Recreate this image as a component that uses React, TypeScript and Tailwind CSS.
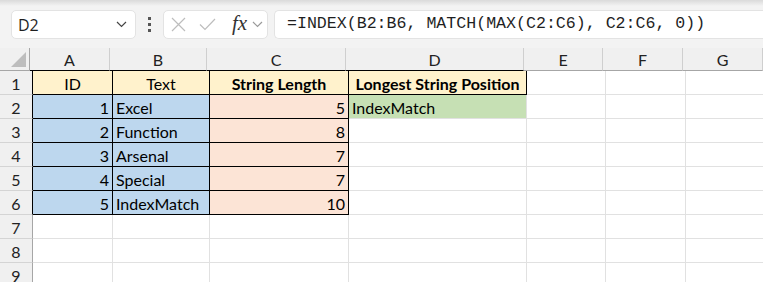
import React from "react";

const cols = [
  { key: "A", w: 80 },
  { key: "B", w: 97 },
  { key: "C", w: 139 },
  { key: "D", w: 178 },
  { key: "E", w: 79 },
  { key: "F", w: 80 },
  { key: "G", w: 80 },
];

type Cell = { v?: string; bg?: string; align?: "l" | "r" | "c"; bold?: boolean; boxed?: boolean };

const rows: Cell[][] = [
  [
    { v: "ID", bg: "bg-[#fff2cc]", align: "c", boxed: true },
    { v: "Text", bg: "bg-[#fff2cc]", align: "c", boxed: true },
    { v: "String Length", bg: "bg-[#fff2cc]", align: "c", bold: true, boxed: true },
    { v: "Longest String Position", bg: "bg-[#fff2cc]", align: "c", bold: true, boxed: true },
  ],
  [
    { v: "1", bg: "bg-[#bdd7ee]", align: "r", boxed: true },
    { v: "Excel", bg: "bg-[#bdd7ee]", boxed: true },
    { v: "5", bg: "bg-[#fce4d6]", align: "r", boxed: true },
    { v: "IndexMatch", bg: "bg-[#c6e0b4]" },
  ],
  [
    { v: "2", bg: "bg-[#bdd7ee]", align: "r", boxed: true },
    { v: "Function", bg: "bg-[#bdd7ee]", boxed: true },
    { v: "8", bg: "bg-[#fce4d6]", align: "r", boxed: true },
  ],
  [
    { v: "3", bg: "bg-[#bdd7ee]", align: "r", boxed: true },
    { v: "Arsenal", bg: "bg-[#bdd7ee]", boxed: true },
    { v: "7", bg: "bg-[#fce4d6]", align: "r", boxed: true },
  ],
  [
    { v: "4", bg: "bg-[#bdd7ee]", align: "r", boxed: true },
    { v: "Special", bg: "bg-[#bdd7ee]", boxed: true },
    { v: "7", bg: "bg-[#fce4d6]", align: "r", boxed: true },
  ],
  [
    { v: "5", bg: "bg-[#bdd7ee]", align: "r", boxed: true },
    { v: "IndexMatch", bg: "bg-[#bdd7ee]", boxed: true },
    { v: "10", bg: "bg-[#fce4d6]", align: "r", boxed: true },
  ],
  [],
  [],
  [],
];

function Chevron({ className }: { className?: string }) {
  return (
    <svg width="11" height="7" viewBox="0 0 11 7" className={className}>
      <path d="M1 1l4.5 4.5L10 1" fill="none" stroke="currentColor" strokeWidth="1.2" />
    </svg>
  );
}

function Toolbar() {
  return (
    <div className="h-[48px] bg-[#f3f3f3] relative">
      <div className="absolute inset-x-0 top-0 h-[6px] bg-gradient-to-b from-[#dadada] to-[#f3f3f3]" />
      <div className="flex items-center h-full pt-[1px] pl-[11px]">
        <div className="w-[125px] h-[29px] bg-white border border-[#e3e3e3] rounded-[5px] flex items-center justify-between pl-[6px] pr-[8px]">
          <span className="text-[16px] text-[#1f1f1f] font-['Open_Sans',sans-serif]">D2</span>
          <Chevron className="text-[#444]" />
        </div>
        <div className="w-[27px] flex flex-col items-center gap-[3px]">
          <span className="w-[3px] h-[3px] bg-[#555]" />
          <span className="w-[3px] h-[3px] bg-[#555]" />
          <span className="w-[3px] h-[3px] bg-[#555]" />
        </div>
        <div className="w-[105px] h-[29px] bg-white border border-[#e3e3e3] rounded-[5px] flex items-center pl-[7px]">
          <svg width="15" height="15" viewBox="0 0 15 15">
            <path d="M1 1l13 13M14 1L1 14" stroke="#bdbdbd" strokeWidth="1.2" />
          </svg>
          <svg width="17" height="13" viewBox="0 0 17 13" className="ml-[13px]">
            <path d="M1 6.5l5 5L16 1" fill="none" stroke="#bdbdbd" strokeWidth="1.2" />
          </svg>
          <span className="ml-[16px] text-[21px] leading-none italic text-[#333] font-['Liberation_Serif',serif] -mt-[3px]">fx</span>
          <Chevron className="ml-[5px] text-[#9a9a9a]" />
        </div>
        <div className="ml-[6px] flex-1 h-[29px] bg-white border border-[#e3e3e3] border-r-0 rounded-l-[5px] flex items-center pl-[12px]">
          <span className="text-[16.6px] text-[#1f1f1f] font-['Liberation_Mono',monospace] whitespace-nowrap">
            =INDEX(B2:B6, MATCH(MAX(C2:C6), C2:C6, 0))
          </span>
        </div>
      </div>
    </div>
  );
}

export default function App() {
  return (
    <div className="w-[763px] h-[282px] overflow-hidden bg-white font-['Lato',sans-serif] text-[16px] text-black">
      <Toolbar />
      <div className="flex">
        {/* corner */}
        <div className="w-[33px] h-[23px] bg-[#f0f0f0] border-r border-b border-[#a6a6a6] flex items-end justify-end pr-[3px] pb-[3px]">
          <svg width="15" height="15" viewBox="0 0 15 15">
            <path d="M15 0V15H0Z" fill="#bdbdbd" />
          </svg>
        </div>
        {cols.map((c, i) => (
          <div
            key={c.key}
            style={{ width: c.w }}
            className={`h-[23px] shrink-0 bg-[#f0f0f0] border-r border-[#cfcfcf] border-b flex items-center justify-center pt-[1px] text-[#222] ${
              i < 4 ? "border-b-black" : "border-b-[#a6a6a6]"
            }`}
          >
            {c.key}
          </div>
        ))}
      </div>
      {rows.map((r, ri) => (
        <div key={ri} className="flex">
          <div
            className={`w-[33px] h-[24px] shrink-0 bg-[#f0f0f0] border-b border-b-[#d4d4d4] border-r flex items-center justify-center pt-[2px] text-[#222] ${
              ri < 6 ? "border-r-black" : "border-r-[#a6a6a6]"
            }`}
          >
            {ri + 1}
          </div>
          {cols.map((c, ci) => {
            const cell = r[ci] || {};
            const below = rows[ri + 1]?.[ci];
            const right = r[ci + 1];
            const bBlack = cell.boxed || below?.boxed;
            const rBlack = cell.boxed || right?.boxed;
            return (
              <div
                key={c.key}
                style={{ width: c.w }}
                className={`h-[24px] shrink-0 border-r border-b flex items-center pt-[2px] px-[3px] whitespace-nowrap ${
                  cell.bg ?? "bg-white"
                } ${bBlack ? "border-b-black" : "border-b-[#e1e1e1]"} ${
                  rBlack ? "border-r-black" : "border-r-[#e1e1e1]"
                } ${cell.align === "r" ? "justify-end" : cell.align === "c" ? "justify-center" : "justify-start"} ${
                  cell.bold ? "font-bold" : ""
                }`}
              >
                {cell.v}
              </div>
            );
          })}
        </div>
      ))}
    </div>
  );
}
